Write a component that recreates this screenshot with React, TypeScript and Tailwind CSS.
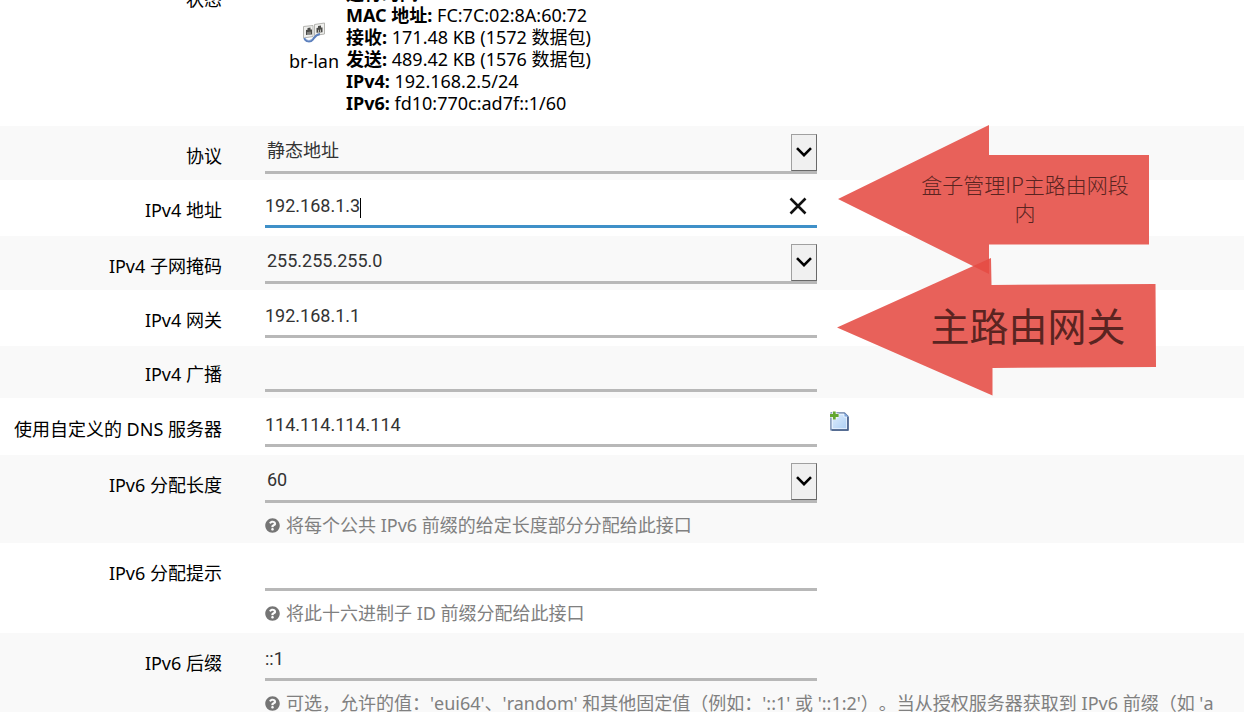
import React from 'react';
import { FaQuestionCircle } from 'react-icons/fa';

type RowProps = {
  id: string;
  label: string;
  className: string;
  help?: string;
  action?: React.ReactNode;
  children: React.ReactNode;
};

const Row: React.FC<RowProps> = ({ id, label, className, help, action, children }) => (
  <div className={`flex gap-[43px] ${className}`}>
    <label htmlFor={id} className="w-[222px] shrink-0 pt-[15px] text-right leading-[22px] whitespace-nowrap">
      {label}
    </label>
    <div className="min-w-0 flex-1">
      <div className="flex gap-3">
        <div className="relative w-full max-w-[552px]">{children}</div>
        {action}
      </div>
      {help && (
        <p className="mt-2.5 flex items-center gap-1.5 whitespace-nowrap leading-6 text-[#808080] [text-spacing-trim:space-all]">
          <FaQuestionCircle className="size-[15px] shrink-0 text-[#757575]" />
          <span>{help}</span>
        </p>
      )}
    </div>
  </div>
);

const TextField: React.FC<{ id: string; value?: string }> = ({ id, value }) => (
  <input
    id={id}
    type="text"
    defaultValue={value}
    className="block h-[44px] w-full border-b-[3px] border-[#b8b8b8] bg-transparent pt-0.5 font-['Roboto','Noto_Sans_CJK_SC',sans-serif] text-[18px] text-[#333] outline-none"
  />
);

const SelectField: React.FC<{ id: string; value: string }> = ({ id, value }) => (
  <>
    <select
      id={id}
      className="block h-[44px] w-full appearance-none border-b-[3px] border-[#b8b8b8] bg-transparent pl-0.5 font-['Roboto','Noto_Sans_CJK_SC',sans-serif] text-[18px] text-[#333] outline-none"
    >
      <option>{value}</option>
    </select>
    <span className="pointer-events-none absolute top-1 right-0 flex h-[37px] w-[26px] items-center justify-center border border-t-[#a0a0a0] border-r-[#696969] border-b-[#696969] border-l-[#a0a0a0] bg-[#f0f0f0] pb-0.5">
      <svg viewBox="0 0 16 10" className="h-2.5 w-4" fill="none" stroke="#000" strokeWidth="2.6">
        <path d="M1 1.2 8 8.2l7-7" />
      </svg>
    </span>
  </>
);

const BridgeIcon: React.FC = () => (
  <svg viewBox="0 0 24 22" className="h-[22px] w-6">
    <path d="M1.500 4.500 11 3.500v11l-9.500 1.500z" fill="#efefed" stroke="#b4b4b0" />
    <path d="M12.500 2.500 22.500 1v11l-10 1.500z" fill="#efefed" stroke="#b4b4b0" />
    <path d="M4 13V8l1.500-.3V6l3-.4v2l1.500-.2v5z" fill="#4b4b48" />
    <path d="M14.500 10.800V6l1.500-.3V4l3-.4v2l1.500-.2v4.800z" fill="#4b4b48" />
    <path d="M6 10v3M8 9.700v3M16.500 7.800v3M18.500 7.500v3" stroke="#b9b9b4" />
    <path d="M2.500 16c1 4 6 4.300 8.500 1.200 2-2.700 3-4.700 7-5.200" fill="none" stroke="#5d80bd" strokeWidth="2.200" />
    <path d="M3 15.800c1.500 3 5.500 3.400 7.500.8" fill="none" stroke="#a9c1e8" strokeWidth=".8" />
  </svg>
);

const AddIcon: React.FC = () => (
  <svg viewBox="0 0 20 21" className="h-[21px] w-5">
    <defs>
      <linearGradient id="sheet" x1="0" y1="0" x2="1" y2="1">
        <stop offset="0" stopColor="#e2effd" />
        <stop offset="1" stopColor="#a9cdf5" />
      </linearGradient>
    </defs>
    <path d="M2 2h13.500L19 5.500V19H2z" fill="url(#sheet)" stroke="#647da5" strokeWidth="1.400" strokeLinejoin="round" />
    <path d="M3.200 3.200H15V6h2.800v11.800H3.200z" fill="none" stroke="#eef6ff" />
    <path d="M15.500 2v3.500H19z" fill="#7fa6dc" />
    <path d="M18.900 6v13H3" fill="none" stroke="#455d87" strokeWidth="1.400" />
    <path d="M5.300.5v8M1 4.500h8.600" stroke="#fff" strokeWidth="4.200" />
    <path d="M5.300.5v8M1 4.500h8.600" stroke="#62a631" strokeWidth="2.800" />
  </svg>
);

const App: React.FC = () => {
  return (
    <main className="relative flex h-screen flex-col overflow-hidden bg-white font-['Noto_Sans','Noto_Sans_CJK_SC',sans-serif] text-[18px] text-black">
      {/* Interface status, scrolled partly out of view */}
      <section className="-mt-[18px] flex shrink-0 pb-3 leading-[22px]">
        <div className="w-[222px] shrink-0 pt-1.5 text-right">状态</div>
        <div className="ml-[66px] flex w-[52px] shrink-0 flex-col items-center pt-10">
          <BridgeIcon />
          <span className="mt-1.5 whitespace-nowrap">br-lan</span>
        </div>
        <div className="ml-1.5 whitespace-nowrap">
          <div><strong>运行时间:</strong></div>
          <div><strong>MAC 地址:</strong> FC:7C:02:8A:60:72</div>
          <div><strong>接收:</strong> 171.48 KB (1572 数据包)</div>
          <div><strong>发送:</strong> 489.42 KB (1576 数据包)</div>
          <div><strong>IPv4:</strong> 192.168.2.5/24</div>
          <div><strong>IPv6:</strong> fd10:770c:ad7f::1/60</div>
        </div>
      </section>

      {/* Settings form */}
      <form className="flex flex-1 flex-col">
        <Row id="proto" label="协议" className="bg-[#f9f9f9] pt-1 pb-1.5">
          <SelectField id="proto" value="静态地址" />
        </Row>
        <Row id="ipaddr" label="IPv4 地址" className="pt-1 pb-2">
          <input
            id="ipaddr"
            type="text"
            defaultValue="192.168.1.3"
            className="block h-[44px] w-full border-b-[3px] border-[#3f90c8] bg-transparent pt-0.5 font-['Roboto','Noto_Sans_CJK_SC',sans-serif] text-[18px] text-[#333] outline-none"
          />
          <span className="absolute top-3.5 left-[95px] h-5 w-px bg-black" />
          <button type="button" aria-label="清除" className="absolute top-[13px] right-2.5 flex size-[18px] items-center justify-center">
            <svg viewBox="0 0 18 18" className="size-[18px]" stroke="#111" strokeWidth="2.600">
              <path d="M1.500 1.500l15 15M16.500 1.500l-15 15" />
            </svg>
          </button>
        </Row>
        <Row id="netmask" label="IPv4 子网掩码" className="bg-[#f9f9f9] pt-1 pb-1.5">
          <SelectField id="netmask" value="255.255.255.0" />
        </Row>
        <Row id="gateway" label="IPv4 网关" className="pt-1 pb-2">
          <TextField id="gateway" value="192.168.1.1" />
        </Row>
        <Row id="broadcast" label="IPv4 广播" className="bg-[#f9f9f9] pt-0.5 pb-1.5">
          <TextField id="broadcast" />
        </Row>
        <Row
          id="dns"
          label="使用自定义的 DNS 服务器"
          className="pt-[5px] pb-2"
          action={
            <button type="button" aria-label="添加" className="mt-2 h-[21px] w-5 shrink-0">
              <AddIcon />
            </button>
          }
        >
          <TextField id="dns" value="114.114.114.114" />
        </Row>
        <Row
          id="ip6assign"
          label="IPv6 分配长度"
          className="bg-[#f9f9f9] pt-1 pb-1.5"
          help="将每个公共 IPv6 前缀的给定长度部分分配给此接口"
        >
          <SelectField id="ip6assign" value="60" />
        </Row>
        <Row id="ip6hint" label="IPv6 分配提示" className="pt-1 pb-2" help="将此十六进制子 ID 前缀分配给此接口">
          <TextField id="ip6hint" />
        </Row>
        <Row
          id="ip6ifaceid"
          label="IPv6 后缀"
          className="flex-1 bg-[#f9f9f9] pt-1"
          help="可选，允许的值：'eui64'、'random' 和其他固定值（例如：'::1' 或 '::1:2'）。当从授权服务器获取到 IPv6 前缀（如 'a"
        >
          <TextField id="ip6ifaceid" value="::1" />
        </Row>
      </form>

      {/* Callout arrows drawn over the form */}
      <div className="absolute top-[125px] left-[838px] flex h-[149px] w-[311px] items-center justify-center pb-1 pl-[63px]">
        <svg viewBox="0 0 311 149" className="absolute inset-0 size-full">
          <path d="M0 74 151 0v30h160v89.500H151V149z" fill="#e54b43" fillOpacity=".88" />
        </svg>
        <p className="relative w-[220px] text-center font-['Noto_Sans_CJK_SC',sans-serif] text-[21px] leading-7 font-light text-[#5a2421]">
          盒子管理IP主路由网段内
        </p>
      </div>
      <div className="absolute top-[258px] left-[837px] flex h-[138px] w-[319px] items-center justify-center pb-1.5 pl-[63px]">
        <svg viewBox="0 0 319 138" className="absolute inset-0 size-full">
          <path d="M0 69.500 154 0l.5 27L318.500 26l.5 83-163.500 1v27.500z" fill="#e54b43" fillOpacity=".88" />
        </svg>
        <p className="relative font-['Noto_Sans_CJK_SC',sans-serif] text-[39px] leading-[48px] font-normal whitespace-nowrap text-[#5a2421]">
          主路由网关
        </p>
      </div>
    </main>
  );
};

export default App;
